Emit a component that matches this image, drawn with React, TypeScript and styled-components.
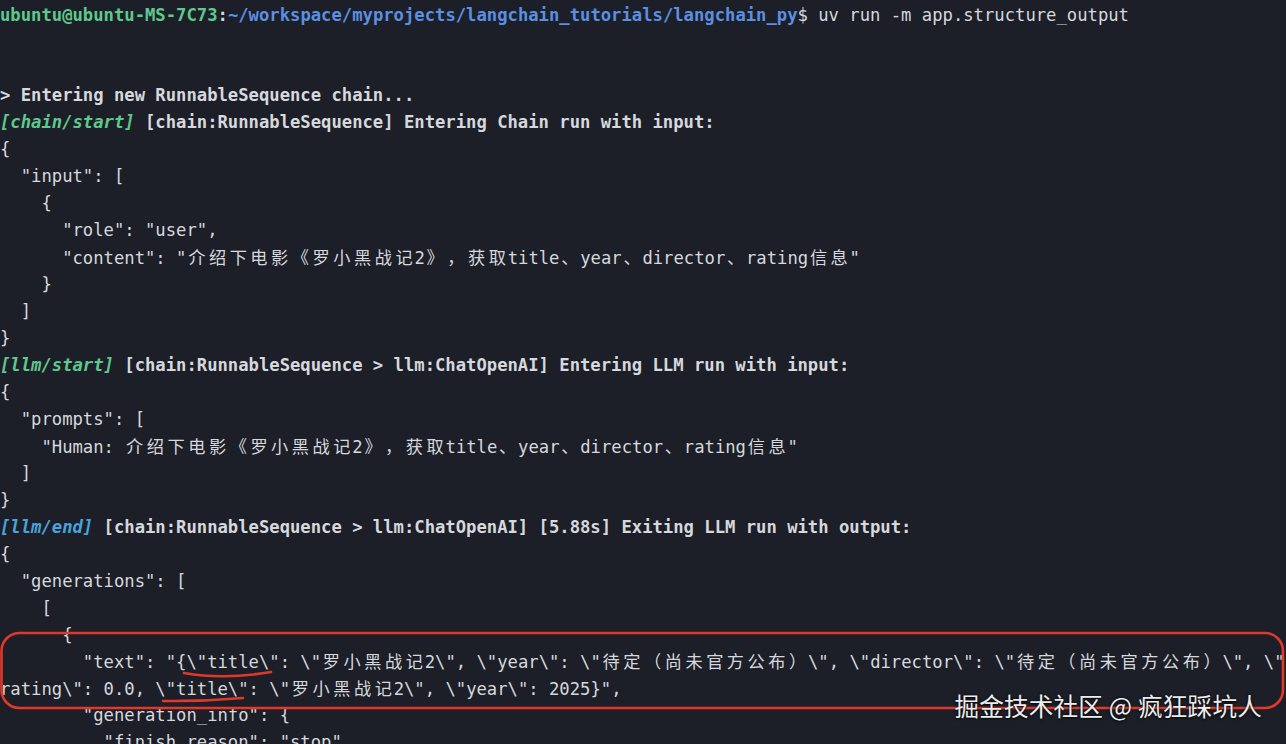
import React from 'react';
import styled, { createGlobalStyle } from 'styled-components';

type Tone = 'text' | 'green' | 'blue' | 'cyan';

const tones: Record<Tone, string> = {
  text: '#d6d8dd',
  green: '#5fc98c',
  blue: '#5b8fe0',
  cyan: '#4aa3da',
};

interface Part {
  t: string;
  tone?: Tone;
  bold?: boolean;
  italic?: boolean;
}

const Global = createGlobalStyle`
  html, body {
    margin: 0;
    padding: 0;
    background: #1c1f28;
  }
  body {
    width: 1286px;
    height: 744px;
    overflow: hidden;
  }
`;

const Screen = styled.main`
  position: relative;
  box-sizing: border-box;
  width: 1286px;
  height: 744px;
  overflow: hidden;
  padding-top: 1.6px;
  background: #1c1f28;
  color: ${tones.text};
  font-family: "DejaVu Sans Mono", "Liberation Mono", monospace;
  font-size: 17.22px;
  display: flex;
  flex-direction: column;
`;

const Line = styled.div`
  flex: none;
  height: 26.96px;
  line-height: 26.96px;
  white-space: pre;
`;

const Seg = styled.span<{ $tone: Tone; $bold?: boolean; $italic?: boolean }>`
  color: ${(p) => tones[p.$tone]};
  font-weight: ${(p) => (p.$bold ? 700 : 400)};
  font-style: ${(p) => (p.$italic ? 'italic' : 'normal')};
`;

const Wide = styled.span`
  font-family: "Noto Sans CJK SC", sans-serif;
  letter-spacing: 3.52px;
  padding-left: 1.76px;
  margin-right: -1.76px;
  text-spacing-trim: space-all;
  font-feature-settings: "halt" 0, "palt" 0, "chws" 0;
`;

const Overlay = styled.svg`
  position: absolute;
  left: 0;
  top: 0;
  width: 1286px;
  height: 744px;
  pointer-events: none;
`;

const Watermark = styled.div`
  position: absolute;
  right: 24px;
  top: 689px;
  font-family: "Noto Sans CJK SC", "Noto Sans", sans-serif;
  font-size: 24.6px;
  line-height: 32px;
  color: #ececec;
  letter-spacing: 0.2px;
  text-shadow: 0 0 3px rgba(0, 0, 0, 0.75), 0 1px 2px rgba(0, 0, 0, 0.6);
  white-space: pre;
`;

const CJK = /([\u3000-\u303f\u3400-\u9fff\uff00-\uffef]+)/;

function renderText(text: string) {
  return text.split(CJK).map((chunk, i) =>
    i % 2 === 1 ? <Wide key={i}>{chunk}</Wide> : <React.Fragment key={i}>{chunk}</React.Fragment>
  );
}

const plain = (t: string): Part[] => [{ t }];

const lines: Part[][] = [
  [
    { t: 'ubuntu@ubuntu-MS-7C73', tone: 'green', bold: true },
    { t: ':', bold: true },
    { t: '~/workspace/myprojects/langchain_tutorials/langchain_py', tone: 'blue', bold: true },
    { t: '$ uv run -m app.structure_output' },
  ],
  plain(''),
  plain(''),
  [{ t: '> Entering new RunnableSequence chain...', bold: true }],
  [
    { t: '[chain/start]', tone: 'green', bold: true, italic: true },
    { t: ' [chain:RunnableSequence] Entering Chain run with input:', bold: true },
  ],
  plain('{'),
  plain('  "input": ['),
  plain('    {'),
  plain('      "role": "user",'),
  plain('      "content": "介绍下电影《罗小黑战记2》，获取title、year、director、rating信息"'),
  plain('    }'),
  plain('  ]'),
  plain('}'),
  [
    { t: '[llm/start]', tone: 'green', bold: true, italic: true },
    { t: ' [chain:RunnableSequence > llm:ChatOpenAI] Entering LLM run with input:', bold: true },
  ],
  plain('{'),
  plain('  "prompts": ['),
  plain('    "Human: 介绍下电影《罗小黑战记2》，获取title、year、director、rating信息"'),
  plain('  ]'),
  plain('}'),
  [
    { t: '[llm/end]', tone: 'cyan', bold: true, italic: true },
    { t: ' [chain:RunnableSequence > llm:ChatOpenAI] [5.88s] Exiting LLM run with output:', bold: true },
  ],
  plain('{'),
  plain('  "generations": ['),
  plain('    ['),
  plain('      {'),
  plain(
    '        "text": "{\\"title\\": \\"罗小黑战记2\\", \\"year\\": \\"待定（尚未官方公布）\\", \\"director\\": \\"待定（尚未官方公布）\\", \\"'
  ),
  plain('rating\\": 0.0, \\"title\\": \\"罗小黑战记2\\", \\"year\\": 2025}",'),
  plain('        "generation_info": {'),
  plain('          "finish_reason": "stop",'),
];

export default function App() {
  return (
    <>
      <Global />
      <Screen>
        {lines.map((parts, i) => (
          <Line key={i}>
            {parts.map((p, j) => (
              <Seg key={j} $tone={p.tone ?? 'text'} $bold={p.bold} $italic={p.italic}>
                {renderText(p.t)}
              </Seg>
            ))}
          </Line>
        ))}
        <Overlay viewBox="0 0 1286 744">
          <rect
            x="1.5"
            y="633"
            width="1281.5"
            height="75"
            rx="18"
            fill="none"
            stroke="#e0392c"
            strokeWidth="2.6"
          />
          <path d="M184 673 Q 224 680 271 672" fill="none" stroke="#e0392c" strokeWidth="2.6" strokeLinecap="round" />
          <path d="M163 701 Q 203 701.5 243 698" fill="none" stroke="#e0392c" strokeWidth="2.6" strokeLinecap="round" />
        </Overlay>
        <Watermark>掘金技术社区 @ 疯狂踩坑人</Watermark>
      </Screen>
    </>
  );
}
